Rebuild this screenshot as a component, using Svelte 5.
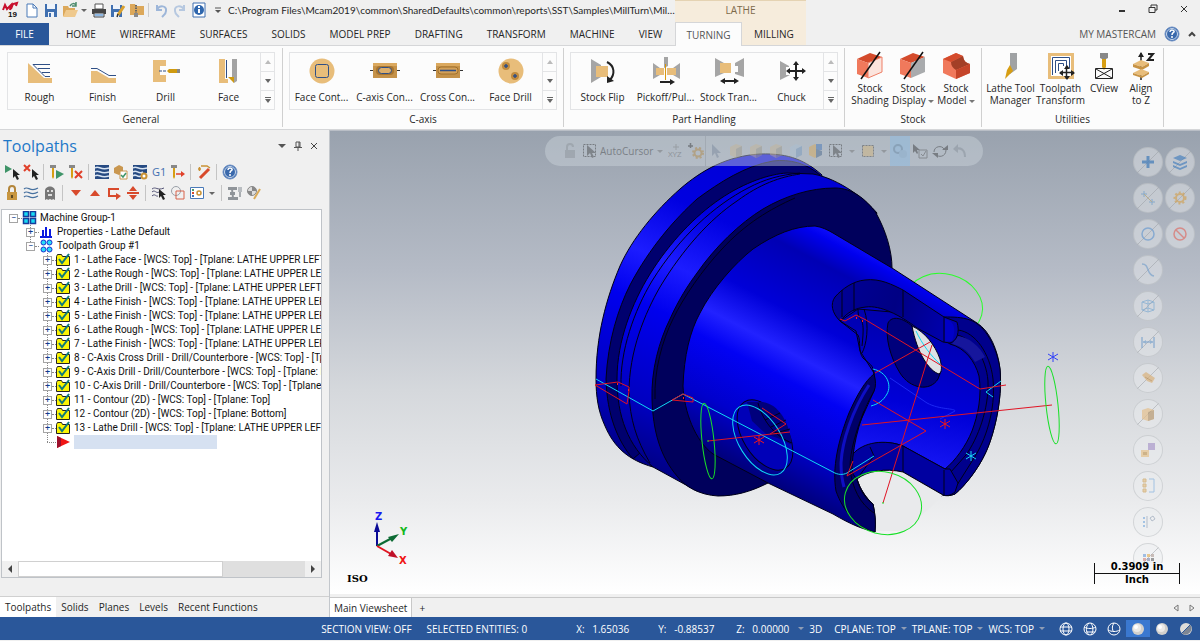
<script>
  const tan = '#e8bd7a';
  const navy = '#2f4f86';

  // inner markup of every icon, keyed by name
  const icons = {
    // quick access, 16 x 16
    logo: '<path d="M1 9l2-5 2 4 4-4-1 5M9 8l2-5 4-1-1 3" fill="none" stroke="#c8102e" stroke-width="2"/><text x="6" y="16" font-size="8" font-weight="bold" font-family="Liberation Sans" fill="#111">19</text>',
    doc: '<path d="M3 2h6l4 4v9H3z" fill="#fff" stroke="#4a7ab8"/><path d="M9 2v4h4" fill="none" stroke="#4a7ab8"/>',
    save: '<path d="M2 2h12v13H2z" fill="#3f6fb0"/><path d="M4 2h8v5H4zM5 10h6v5H5z" fill="#eef3fa"/><path d="M6 11h2v4H6z" fill="#3f6fb0"/>',
    open: '<path d="M1 4h5l1 2h6v8H1z" fill="#dca85a"/><path d="M4 8h12l-3 7H1z" fill="#efc98d"/><path d="M8 4c2-3 4-3 6-1M14 0v4h-4" fill="none" stroke="#4b8a6c" stroke-width="1.5"/>',
    print: '<path d="M4 2h8v5H4z" fill="#fff" stroke="#555"/><path d="M1 7h14v5H1z" fill="#444"/><path d="M3 11h10v4H3z" fill="#dce8f5" stroke="#444"/><path d="M4 13h8" stroke="#3f86d0"/>',
    saveas: '<path d="M1 3h11v12H1z" fill="#3f6fb0"/><path d="M3 3h7v4H3zM4 10h5v5H4z" fill="#eef3fa"/><path d="M14 4l-6 9" stroke="#d9a02e" stroke-width="3"/><path d="M8 12l-1 3" stroke="#333" stroke-width="1.5"/>',
    zip: '<path d="M1 2h5l1 2h8v9H1z" fill="#dca85a"/><path d="M7 3v12" stroke="#666" stroke-width="2" stroke-dasharray="1.500 1"/><path d="M5 11h4v4H5z" fill="#8a8a8a"/>',
    undo: '<path d="M4 3v5h5M4 8c2-5 10-5 9 1 0 3-2 4-4 6" fill="none" stroke="#9db6d9" stroke-width="2"/>',
    redo: '<path d="M12 3v5H7M12 8C10 3 2 3 3 9c0 3 2 4 4 6" fill="none" stroke="#b6c8e0" stroke-width="2"/>',
    info: '<path d="M2 1h12v14H2z" fill="#fff" stroke="#3f6fb0"/><circle cx="8" cy="8" r="5" fill="#2f66ad"/><path d="M8 4v2M8 7v4" stroke="#fff" stroke-width="2"/>',
    more: '<path d="M5 6h6" stroke="#555"/><path d="M5 8h6l-3 3z" fill="#555"/>',

    // ribbon gallery, 32 x 32
    rough: `<path d="M4 8l16 15h8v5H4z" fill="${tan}"/><path d="M9 9.500h17M14 13.500h12M18 17.500h8M9 9.500l12 12h5" fill="none" stroke="${navy}"/>`,
    finish: `<path d="M4 16h6l12 7h7v5H4z" fill="${tan}"/><path d="M4 13.500h6l12 7h7" fill="none" stroke="${navy}"/>`,
    drill: `<path d="M3 5h13v6h-6v9h6v7H3z" fill="${tan}"/><path d="M9 16h8" stroke="${navy}" stroke-dasharray="3 1"/><path d="M19 14h8v4h-8l-2-2z" fill="#cf9a10"/><path d="M27 14h3v4h-3z" fill="#888"/>`,
    face: `<path d="M6 4h6v20h3v4H6z" fill="${tan}"/><path d="M13.500 5v18" stroke="${navy}"/><path d="M19 4h5v22l-3 2-2-3z" fill="#a3a3a3"/><path d="M15 22h6v6z" fill="#cf9a10"/>`,
    facecont: `<circle cx="16" cy="16" r="12.500" fill="${tan}"/><rect x="9.500" y="9.500" width="13" height="13" rx="2" fill="none" stroke="${navy}"/>`,
    caxis: `<path d="M1 15.500h30" stroke="#333"/><path d="M4 8h24v15H4z" fill="#c59249"/><path d="M4 8h24v3H4z" fill="#dba95f"/><rect x="7" y="11" width="18" height="9" rx="4" fill="#a8752f"/><rect x="9.500" y="12.500" width="13" height="6" rx="3" fill="#dcae6b" stroke="${navy}"/>`,
    cross: `<path d="M1 15.500h30" stroke="#333"/><path d="M4 8h24v15H4z" fill="#c59249"/><path d="M4 8h24v3H4z" fill="#dba95f"/><rect x="6" y="12" width="20" height="7" rx="3" fill="#d3a058" stroke="#a0702c"/><path d="M8 15.500h16" stroke="${navy}" stroke-width="1.500"/>`,
    facedrill: `<circle cx="16" cy="16" r="12.500" fill="${tan}"/><circle cx="11" cy="11" r="4" fill="#c08a3d"/><circle cx="20" cy="21" r="4" fill="#c08a3d"/><path d="M11 9v4M9 11h4M20 19v4M18 21h4" stroke="${navy}" stroke-width="1.500"/>`,
    flip: `<path d="M4 4l10 6v12L4 28z" fill="#a5a5a5"/><path d="M9 11h12v11H9z" fill="${tan}"/><path d="M20 7c8 4 8 12 3 18" fill="none" stroke="#222" stroke-width="2"/><path d="M20 21v7l7-2z" fill="#222"/>`,
    pickoff: `<path d="M3 8l7 5v7l-7 4zM30 8l-7 5v7l7 4zM14 2h4v9l-4 2z" fill="#a5a5a5"/><path d="M6 13h8v7H6zM17 13h9v7h-9z" fill="${tan}"/><path d="M15.500 9v16" stroke="#d9980f"/><path d="M10 27h13" stroke="#222" stroke-width="2"/><path d="M20 24l5 3-5 3z" fill="#222"/>`,
    transfer: `<path d="M2 3l9 5v10l-9 4zM31 3l-9 5v3h3v6h-3v2l9 3z" fill="#a5a5a5"/><path d="M7 8h11v10H7z" fill="${tan}"/><path d="M10 26h13" stroke="#222" stroke-width="2"/><path d="M12 23l-5 3 5 3zM21 23l5 3-5 3z" fill="#222"/>`,
    chuck: '<path d="M4 6l9 5v1h-3v8h4l-10 5z" fill="#a5a5a5"/><path d="M20 8v16M13 16h15" stroke="#222" stroke-width="2"/><path d="M17 10l3-4 3 4zM17 22l3 4 3-4zM14 13l-4 3 4 3zM26 13l4 3-4 3z" fill="#222"/>',

    // large ribbon buttons, 32 x 32
    shading: '<path d="M3 9l13-6 12 4-14 6z" fill="#d44b2c"/><path d="M3 9l11 4v15L3 24z" fill="#f0795c"/><path d="M14 13l14-6v15l-14 6z" fill="#fbe4dd" stroke="#ee7f66"/><path d="M7 29L26 2" stroke="#111" stroke-width="1.500"/>',
    display: '<path d="M3 9l13-6 12 4-14 6z" fill="#d44b2c"/><path d="M3 9l11 4v15L3 24z" fill="#f0795c"/><path d="M14 13l14-6v15l-14 6z" fill="#a9abad"/><path d="M7 29L26 2" stroke="#111" stroke-width="1.500"/>',
    model: '<path d="M3 9l13-6 7 3c1 6 4 7 7 8v9l-14 6-13-6z" fill="#f0795c"/><path d="M3 9l13-6 7 3-12 6z" fill="#d44b2c"/><path d="M11 12l12-6c1 6 4 7 7 8l-14 6c-3-2-5-4-5-8z" fill="#a33f27"/><path d="M16 20l14-6v9l-14 6z" fill="#c5452a"/>',
    lathetool: '<path d="M15 3h7v16l-7 5z" fill="#a0a2a4"/><path d="M15 15l3 6-8 8 2-9z" fill="#d79e13"/>',
    transform: `<path d="M3 3h26v26H3z" fill="${tan}"/><path d="M6 6h20v20H6z" fill="#fff"/><path d="M7.500 25V7.500h17V18M10.500 23V10.500h11V16M13.500 21v-7.500h5V16" fill="none" stroke="${navy}"/><path d="M21.500 16v13M15 22.500h14" stroke="#222" stroke-width="1.500"/><path d="M19 19l3-4 3 4zM19 26l3 4 3-4zM18 20l-4 3 4 3zM26 20l4 3-4 3z" fill="#222"/>`,
    cview: '<path d="M12 3h8v5l-2 1h-4l-2-1z" fill="#888"/><path d="M14 9h4v8l-2 3-2-3z" fill="#d79e13"/><path d="M7.500 18.500h17v10h-17zM8 19l16 9M24 19l-16 9" fill="none" stroke="#222"/>',
    align: '<path d="M16 3v27" stroke="#222" stroke-width="1.500"/><path d="M13 7l3-5 3 5z" fill="#222"/><path d="M8 14l8-4 8 3-7 4z" fill="#e8bd7a"/><path d="M8 14l9 3v3l-9-3zM17 17l7-4v3l-7 4z" fill="#c79344"/><path d="M8 23l8-4 8 3-7 4z" fill="#e8bd7a"/><path d="M8 23l9 3v2l-9-3zM17 26l7-4v2l-7 4z" fill="#c79344"/><path d="M23 4h5l-5 6h6" fill="none" stroke="#222" stroke-width="2"/>',

    // toolpath manager, 16 x 16
    selall: '<path d="M1 1l7 4-7 4z" fill="#3f9468"/><path d="M9 5v9l2-2 2 4 2-1-2-4h3z" fill="#222"/>',
    selnone: '<path d="M1 1l6 6M7 1L1 7" stroke="#e0402a" stroke-width="2"/><path d="M9 5v9l2-2 2 4 2-1-2-4h3z" fill="#222"/>',
    regen: '<path d="M1 1h6v3H1z" fill="#888"/><path d="M3 4h2v9l-1 2-1-2z" fill="#d79e13"/><path d="M7 6l8 4-8 5z" fill="#3f9468"/>',
    regenx: '<path d="M1 1h6v3H1z" fill="#888"/><path d="M3 4h2v9l-1 2-1-2z" fill="#d79e13"/><path d="M7 7l7 7M14 7l-7 7" stroke="#e0402a" stroke-width="2"/>',
    waves: '<path d="M1 1h14v14H1z" fill="#264a82"/><path d="M1 4c4-3 5 3 14 0M1 8c4-3 5 3 14 0M1 12c4-3 5 3 14 0" fill="none" stroke="#d8e4f2" stroke-width="1.500"/>',
    verify: '<path d="M1 4l5-3 4 2v5l-4 3-5-2z" fill="#c99750"/><path d="M7 7h7v8H7z" fill="#fff" stroke="#c99750"/><path d="M8 11l2 2 3-4" fill="none" stroke="#3f9468" stroke-width="1.500"/>',
    simul: '<path d="M1 1h14v8H9v6H1z" fill="#264a82"/><path d="M1 4c4-3 5 3 14 0M1 8c4-3 5 3 10 0M1 12c3-3 4 2 8 0" fill="none" stroke="#d8e4f2" stroke-width="1.500"/><circle cx="12" cy="12" r="2.500" fill="#fff" stroke="#c99235" stroke-width="2"/>',
    g1: '<text x="1" y="12" font-size="11" font-family="Open Sans, sans-serif" fill="#3f6fb0">G1</text>',
    feed: '<path d="M1 1h6v3H1z" fill="#888"/><path d="M3 4h2v9l-1 2-1-2z" fill="#d79e13"/><path d="M6 10h7" stroke="#e0402a" stroke-width="1.500"/><path d="M11 7l4 3-4 3z" fill="#e0402a"/>',
    wand: '<path d="M4 14l9-9" stroke="#d84a2c" stroke-width="3"/><path d="M2 5h3M3.500 3v4M5 2h6l3 2" fill="none" stroke="#c99235" stroke-width="1.500"/>',
    help: '<circle cx="8" cy="8" r="7" fill="#3a69ac" stroke="#6c8fc4"/><circle cx="8" cy="8" r="5.500" fill="none" stroke="#c9d8ec"/><path d="M6 6c0-3 5-2 4 0-1 1-2 1-2 3M8 10v2" fill="none" stroke="#fff" stroke-width="1.500"/>',
    lock: '<path d="M3 7h10v8H3z" fill="#c8963f"/><path d="M5 7V4c0-4 6-4 6 0v3" fill="none" stroke="#b3853a" stroke-width="2"/><path d="M7 10h2v3H7z" fill="#5b4720"/>',
    seas: '<path d="M1 4c4-4 6 4 14-1M1 8c4-4 6 4 14-1M1 12c4-4 6 4 14-1" fill="none" stroke="#47719f" stroke-width="1.200"/>',
    ghost: '<path d="M3 15V6c0-6 10-6 10 0v9l-2-1-1 1-2-1-2 1-1-1z" fill="#777"/><path d="M5 5h2v2H5zM9 5h2v2H9zM6 9h4v2H6z" fill="#ddd"/>',
    down: '<path d="M3 5h10l-5 6z" fill="#d84a2c"/>',
    up: '<path d="M3 11h10L8 5z" fill="#d84a2c"/>',
    loop: '<path d="M13 4H3v7h8" fill="none" stroke="#d84a2c" stroke-width="2"/><path d="M10 8l5 3-5 4z" fill="#d84a2c"/>',
    center: '<path d="M2 8h12" stroke="#d84a2c" stroke-width="2"/><path d="M4 6l4-5 4 5zM4 10l4 5 4-5z" fill="#d84a2c"/>',
    pickpath: '<path d="M1 4c4-3 5 2 12-1M1 7c3-3 4 2 7 0M1 11c3-3 4 1 6 0" fill="none" stroke="#557" /><path d="M8 4v9l2-2 2 4 2-1-2-4h3z" fill="#222"/>',
    shapes: '<circle cx="6" cy="6" r="4.500" fill="none" stroke="#9aa0a8"/><path d="M6 6h8v8H6z" fill="none" stroke="#d8624a"/>',
    opts: '<path d="M1.500 2.500h13v11h-13z" fill="#fff" stroke="#4a7ab8"/><path d="M3 4h2v2H3z" fill="#4a9a6a"/><path d="M3 7h2v2H3z" fill="#d84a2c"/><path d="M3 10h2v2H3z" fill="#3f6fb0"/><circle cx="10" cy="8" r="2" fill="none" stroke="#c99235" stroke-width="1.500"/>',
    mach: '<path d="M1 2h9v3H1zM3 7h5v3H3zM1 12h10v3H1z" fill="#8f9499"/><path d="M11 2h4v5h-4z" fill="#b9bdc1"/><path d="M12 7h2v5h-2z" fill="#a9adb1"/><path d="M5 4l1 9" stroke="#8f9499" stroke-width="2"/>',
    edit: '<circle cx="6" cy="6" r="4.500" fill="#ddd" stroke="#888"/><path d="M6 1.500V6h4.500A4.500 4.500 0 0 0 6 1.500zM6 6v4.500A4.500 4.500 0 0 1 1.500 6z" fill="#888"/><path d="M14 4l-6 10" stroke="#d9aa58" stroke-width="2"/>',
    caret: '<path d="M5 7h6l-3 3z" fill="#666"/>',

    // tree nodes, 16 x 14
    machine: '<path d="M1.500 .500h5v5h-5zM8.500 .500h5v5h-5zM1.500 7.500h5v5h-5zM8.500 7.500h5v5h-5z" fill="#19d9f4" stroke="#173c9c" stroke-width="1.500"/>',
    props: '<path d="M1 12h12M4 5v7M7 2v10M11 4v8" fill="none" stroke="#0b1be0" stroke-width="2"/>',
    group: '<g fill="#27dcf6" stroke="#1b2fd0"><circle cx="4.500" cy="3.500" r="2.500"/><circle cx="10.500" cy="3.500" r="2.500"/><circle cx="4.500" cy="10.500" r="2.500"/><circle cx="10.500" cy="10.500" r="2.500"/></g>',
    folder: '<path d="M.500 3.500l1-2h4l1 2h7v9h-13z" fill="#fbf305" stroke="#222"/><path d="M3 6l3 4 7-9" fill="none" stroke="#0f7a7a" stroke-width="2"/>',
    insert: '<path d="M1 1l13 6-13 6z" fill="#f01414"/><path d="M1 1l4 2v8l-4 2z" fill="#9c0f2c"/>',

    // selection bar, 16 x 16
    padlock: '<path d="M3 7h10v8H3z" fill="#858b92"/><path d="M5 7V4c0-4 6-4 6 0" fill="none" stroke="#858b92" stroke-width="2"/>',
    cursor: '<path d="M1.500 1.500h12v12h-12z" fill="none" stroke="#222" stroke-dasharray="2 1"/><path d="M5 2v11l3-3 2 5 2-1-2-4h4z" fill="#333"/>',
    xyz: '<text x="0" y="14" font-size="8" font-family="Open Sans, sans-serif" fill="#555">XYZ</text><path d="M8 1v6M5 4h6" stroke="#777"/>',
    gear: '<circle cx="10" cy="10" r="3.500" fill="none" stroke="#b07d2b" stroke-width="2"/><path d="M0 3h5M2.500 0v5" stroke="#222" stroke-width="1.500"/><circle cx="10" cy="10" r="5" fill="none" stroke="#b07d2b" stroke-width="2" stroke-dasharray="2 2"/>',
    arrow: '<path d="M4 1v12l3-3 2 5 2-1-2-4h4z" fill="#6f7f95"/>',
    box: '<path d="M2 4l6-3 6 2v9l-6 3-6-3z" fill="#c9b48e"/><path d="M8 6l6-3v9l-6 3z" fill="#98917f"/>',
    bluebox: '<path d="M2 4l6-3 6 2v9l-6 3-6-3z" fill="#a9c0d6"/><path d="M8 6l6-3v9l-6 3z" fill="#6a93bd"/>',
    mixbox: '<path d="M1 4l6-3 3 2v9l-3 3-6-3z" fill="#e0a642"/><path d="M8 1h6v6H8z" fill="#2c66b5"/><path d="M8 6l6 2v4l-6 3z" fill="#31557f"/>',
    area: '<path d="M2.500 2.500h11v11h-11z" fill="#d9b36c" stroke="#333" stroke-dasharray="2 1"/>',
    pair: '<circle cx="6" cy="6" r="4" fill="none" stroke="#6b7f92" stroke-width="2"/><circle cx="11" cy="11" r="4" fill="#93adc3"/>',
    check: '<path d="M1 1v9l2-2 2 3 1-1-1-3h3z" fill="#222"/><path d="M7 7h8v8H7zM9 11l2 2 3-5" fill="none" stroke="#444"/>',
    rotate: '<path d="M2 9c0-6 8-7 10-3M14 7c0 7-8 8-10 4" fill="none" stroke="#222"/><path d="M10 7h6V2zM0 10h6v5z" fill="#222"/>',
    back: '<path d="M3 6c6-2 10 1 10 8" fill="none" stroke="#7c858f" stroke-width="2"/><path d="M6 1v9L1 6z" fill="#7c858f"/>',

    // quick masks, 16 x 16
    plus: '<path d="M8 2v12M2 8h12" stroke="#3f7ab8" stroke-width="3"/>',
    layers: '<path d="M8 1l7 3-7 3-7-3z" fill="#4b82bd"/><path d="M1 7l7 3 7-3v2l-7 3-7-3zM1 11l7 3 7-3v2l-7 3-7-3z" fill="#4b82bd"/>',
    nodes: '<path d="M4 1v6M1 4h6M12 9v6M9 12h6" stroke="#6c9cc8"/><path d="M4 4l8 8" stroke="#b5a06c"/>',
    sun: '<circle cx="8" cy="8" r="4" fill="none" stroke="#d0a35a" stroke-width="2"/><circle cx="8" cy="8" r="5.500" fill="none" stroke="#d0a35a" stroke-width="2" stroke-dasharray="2 2"/>',
    ring: '<circle cx="8" cy="8" r="6" fill="none" stroke="#6c9cd0" stroke-width="1.500"/>',
    ban: '<circle cx="8" cy="8" r="6" fill="none" stroke="#dc7068" stroke-width="1.500"/><path d="M4 4l8 8" stroke="#dc7068" stroke-width="1.500"/>',
    curve: '<path d="M2 2c8 0 4 11 12 12" fill="none" stroke="#7ba3cc" stroke-width="1.500"/>',
    cage: '<path d="M2 4l6-2 6 2v8l-6 2-6-2zM2 4l6 2 6-2M8 2v12M2 12l6-2 6 2" fill="none" stroke="#7fabd2"/>',
    dim: '<path d="M2 3v11M14 3v11M3 8h10" stroke="#7ba3cc" stroke-width="1.500"/><path d="M3 8l3-2v4zM13 8l-3-2v4z" fill="#7ba3cc"/>',
    bar: '<path d="M2 5l4-3 9 6-3 5-5-2z" fill="#d9b27d"/><path d="M5 7l7 4" stroke="#b98d52"/>',
    cubes: '<path d="M2 4l6-2 6 2v9l-6 2-6-2z" fill="#e4c08d"/><path d="M8 6l6-2v9l-6 2z" fill="#b89a70"/>',
    colors: '<path d="M8 1h7v7H8z" fill="#ab9acb"/><path d="M1 8h8v7H1z" fill="#e5c28c"/><path d="M3 10h4v3H3z" fill="#c39e61"/>',
    list: '<path d="M3 1h3v3H3zM3 6h3v3H3zM3 11h3v3H3z" fill="#e5c28c" stroke="#cfa96b"/><path d="M9 1h5v13H9" fill="none" stroke="#86b2e0"/>',
    levels: '<path d="M3 3h2v2H3zM3 7h2v2H3zM3 11h2v2H3z" fill="#86b2e0"/><path d="M7 2v12M10 4l3-2 2 3-3 2z" fill="none" stroke="#9ba9bb"/>',
    palette: '<path d="M3 4h3v3H3z" fill="#7fa8dc"/><path d="M7 4h3v3H7z" fill="#e5b765"/><path d="M11 4h3v3h-3z" fill="#b7a6a0"/><path d="M3 8h3v3H3z" fill="#d7918a"/><path d="M7 8h3v3H7z" fill="#8f97b8"/><path d="M11 8h3v3h-3z" fill="#777"/>',

    // status bar, 16 x 16
    globe: '<g fill="none" stroke="#fff"><circle cx="8" cy="8" r="6"/><ellipse cx="8" cy="8" rx="3" ry="6"/><path d="M2 6h12M2 10h12"/></g>',
    globe2: '<g fill="none" stroke="#fff"><circle cx="8" cy="8" r="6"/><path d="M7 2c-4 4-3 9 0 12M9 2c2 3 3 8 0 12M2 6c4 2 8 2 12 0M4 11h9"/></g>',
    globe3: '<g fill="none" stroke="#fff"><circle cx="8" cy="8" r="6"/><path d="M8 2c-2 3-2 5-1 8M2 9c4 2 8 2 12 0"/></g>',
    ball: '<circle cx="8" cy="8" r="6" fill="#d2d0cc"/><circle cx="7" cy="7" r="4" fill="#eceae7"/><circle cx="6" cy="6" r="2" fill="#fff"/>',
    half: '<circle cx="8" cy="8" r="6" fill="#dedcd8"/><path d="M12.200 3.800a6 6 0 0 1-8.400 8.400z" fill="#7d8694"/><path d="M13 3L3 13" stroke="#2a579a"/>'
  };

  const quick = ['doc', 'save', 'open', 'caret', 'print', 'saveas', 'zip', '|', 'undo', 'redo', 'info', 'more'];
  const tabs = ['HOME', 'WIREFRAME', 'SURFACES', 'SOLIDS', 'MODEL PREP', 'DRAFTING', 'TRANSFORM', 'MACHINE', 'VIEW'];

  const galleries = [
    { name: 'General', items: [['rough', 'Rough'], ['finish', 'Finish'], ['drill', 'Drill'], ['face', 'Face']] },
    { name: 'C-axis', items: [['facecont', 'Face Cont...'], ['caxis', 'C-axis Con...'], ['cross', 'Cross Con...'], ['facedrill', 'Face Drill']] },
    { name: 'Part Handling', items: [['flip', 'Stock Flip'], ['pickoff', 'Pickoff/Pul...'], ['transfer', 'Stock Tran...'], ['chuck', 'Chuck']] }
  ];
  const stock = [
    ['shading', 'Stock', 'Shading', false],
    ['display', 'Stock', 'Display', true],
    ['model', 'Stock', 'Model', true]
  ];
  const utilities = [
    ['lathetool', 'Lathe Tool', 'Manager'],
    ['transform', 'Toolpath', 'Transform'],
    ['cview', 'CView', ''],
    ['align', 'Align', 'to Z']
  ];

  const toolsTop = ['selall', 'selnone', '|', 'regen', 'regenx', '|', 'waves', 'verify', 'simul', 'g1', 'feed', '|', 'wand', '|', 'help'];
  const toolsBottom = ['lock', 'seas', 'ghost', '|', 'down', 'up', 'loop', 'center', '|', 'pickpath', 'shapes', 'opts', 'caret', '|', 'mach', 'edit'];

  const operations = [
    '1 - Lathe Face - [WCS: Top] - [Tplane: LATHE UPPER LEFT',
    '2 - Lathe Rough - [WCS: Top] - [Tplane: LATHE UPPER LEF',
    '3 - Lathe Drill - [WCS: Top] - [Tplane: LATHE UPPER LEFT 3',
    '4 - Lathe Finish - [WCS: Top] - [Tplane: LATHE UPPER LEFT',
    '5 - Lathe Finish - [WCS: Top] - [Tplane: LATHE UPPER LEFT',
    '6 - Lathe Rough - [WCS: Top] - [Tplane: LATHE UPPER LEF',
    '7 - Lathe Finish - [WCS: Top] - [Tplane: LATHE UPPER LEFT',
    '8 - C-Axis Cross Drill - Drill/Counterbore - [WCS: Top] - [Tp',
    '9 - C-Axis Drill - Drill/Counterbore - [WCS: Top] - [Tplane: N',
    '10 - C-Axis Drill - Drill/Counterbore - [WCS: Top] - [Tplane:',
    '11 - Contour (2D) - [WCS: Top] - [Tplane: Top]',
    '12 - Contour (2D) - [WCS: Top] - [Tplane: Bottom]',
    '13 - Lathe Drill - [WCS: Top] - [Tplane: LATHE UPPER LEFT'
  ];

  const selection = ['arrow', 'box', 'box', 'box', 'bluebox', 'mixbox', 'cursor', 'caret', 'area', 'caret', 'pair', 'check', 'rotate', 'back'];
  const masks = [
    ['plus', 'layers'], ['nodes', 'sun'], ['ring', 'ban'], ['curve'], ['cage'], ['dim'],
    ['bar'], ['cubes'], ['colors'], ['list'], ['levels'], ['palette']
  ];
  const plainMasks = ['ban', 'colors', 'list', 'levels'];

  const panels = ['Toolpaths', 'Solids', 'Planes', 'Levels', 'Recent Functions'];
  const shadings = ['globe', 'globe2', 'globe3', 'ball', 'ball', 'half'];
</script>

{#snippet icon(name, size = 16, height = size)}
  <svg class="icon" width={size} {height} viewBox="0 0 {size} {height}" aria-hidden="true">{@html icons[name]}</svg>
{/snippet}

{#snippet star(x, y, color)}
  <path d="M{x} {y - 5}v10M{x - 5} {y - 3}l10 6M{x + 5} {y - 3}l-10 6" stroke={color} />
{/snippet}

{#snippet tools(list)}
  <div class="tools">
    {#each list as name}
      {#if name === '|'}
        <span class="sep"></span>
      {:else}
        <button class:small={name === 'caret'} aria-label={name}>{@render icon(name)}</button>
      {/if}
    {/each}
  </div>
{/snippet}

<div class="app">
  <header>
    <div class="left">
      <div class="titlebar">
        <span class="logo">{@render icon('logo', 18)}</span>
        {#each quick as name}
          {#if name === '|'}
            <span class="sep"></span>
          {:else}
            <button class:small={name === 'caret'} aria-label={name}>{@render icon(name)}</button>
          {/if}
        {/each}
        <span class="path">C:\Program Files\Mcam2019\common\SharedDefaults\common\reports\SST\Samples\MillTurn\Mill...</span>
      </div>
      <nav class="tabs">
        <button class="file">FILE</button>
        {#each tabs as tab}
          <button>{tab}</button>
        {/each}
      </nav>
    </div>
    <div class="context">
      <div class="context-title">LATHE</div>
      <nav class="tabs">
        <button class="active">TURNING</button>
        <button>MILLING</button>
      </nav>
    </div>
    <div class="right">
      <div class="window-buttons">
        <button aria-label="Minimize"><svg width="10" height="10"><path d="M2 7h6" stroke="#333" stroke-width="2" /></svg></button>
        <button aria-label="Restore"><svg width="10" height="10"><path d="M3 3V1h6v5H7M1 3.500h6v5H1z" fill="none" stroke="#333" /></svg></button>
        <button aria-label="Close"><svg width="10" height="10"><path d="M2 2l6 6M8 2L2 8" stroke="#333" /></svg></button>
      </div>
      <div class="account">
        <a href="#account">MY MASTERCAM</a>
        <button aria-label="Help">{@render icon('help')}</button>
        <button aria-label="Collapse"><svg width="8" height="8"><path d="M1 6l3-3 3 3" fill="none" stroke="#444" stroke-width="2" /></svg></button>
      </div>
    </div>
  </header>

  <div class="ribbon">
    {#each galleries as group}
      <section class="group gallery-group">
        <div class="gallery">
          {#each group.items as [name, label]}
            <button class="item">
              {@render icon(name, 32)}
              <span>{label}</span>
            </button>
          {/each}
          <div class="scroll">
            <button aria-label="Up"><svg width="6" height="4"><path d="M0 4h6L3 0z" fill="#bbb" /></svg></button>
            <button aria-label="Down"><svg width="6" height="4"><path d="M0 0h6L3 4z" fill="#666" /></svg></button>
            <button aria-label="More"><svg width="6" height="6"><path d="M0 0h6v1H0zM0 2h6L3 6z" fill="#666" /></svg></button>
          </div>
        </div>
        <h2>{group.name}</h2>
      </section>
    {/each}
    <section class="group stock">
      <div class="large">
        {#each stock as [name, first, second, menu]}
          <button>
            {@render icon(name, 32)}
            <span>{first}</span>
            <span>{second}{#if menu}<i class="arrow"></i>{/if}</span>
          </button>
        {/each}
      </div>
      <h2>Stock</h2>
    </section>
    <section class="group utilities">
      <div class="large">
        {#each utilities as [name, first, second]}
          <button>
            {@render icon(name, 32)}
            <span>{first}</span>
            <span>{second}</span>
          </button>
        {/each}
      </div>
      <h2>Utilities</h2>
    </section>
  </div>

  <main>
    <aside>
      <div class="panel-head">
        <h1>Toolpaths</h1>
        <button aria-label="Menu"><svg width="8" height="8"><path d="M0 2h8L4 6z" fill="#555" /></svg></button>
        <button aria-label="Pin"><svg width="8" height="10"><path d="M2 1h4v5H2zM0 6.500h8M4 7v3M5 1v5" fill="none" stroke="#555" /></svg></button>
        <button aria-label="Close"><svg width="8" height="8"><path d="M1 1l6 6M7 1L1 7" stroke="#444" /></svg></button>
      </div>
      {@render tools(toolsTop)}
      {@render tools(toolsBottom)}
      <div class="tree">
        <ul>
          <li>
            <div class="row"><span class="toggle">−</span><span class="dots"></span>{@render icon('machine', 16, 14)}<span>Machine Group-1</span></div>
            <ul class="nested">
              <li>
                <div class="row"><span class="toggle">+</span><span class="dots"></span>{@render icon('props', 16, 14)}<span>Properties - Lathe Default</span></div>
              </li>
              <li class="last">
                <div class="row"><span class="toggle">−</span><span class="dots"></span>{@render icon('group', 16, 14)}<span>Toolpath Group #1</span></div>
                <ul class="nested">
                  {#each operations as operation}
                    <li>
                      <div class="row"><span class="toggle">+</span><span class="dots"></span>{@render icon('folder', 16, 14)}<span>{operation}</span></div>
                    </li>
                  {/each}
                  <li>
                    <div class="row insert"><span class="dots"></span>{@render icon('insert', 16, 14)}<span class="marker"></span></div>
                  </li>
                </ul>
              </li>
            </ul>
          </li>
        </ul>
        <div class="hscroll">
          <button aria-label="Scroll left"><svg width="6" height="8"><path d="M5 0v8L1 4z" fill="#444" /></svg></button>
          <span class="thumb"></span>
          <span class="track"></span>
          <button aria-label="Scroll right"><svg width="6" height="8"><path d="M1 0v8l4-4z" fill="#444" /></svg></button>
        </div>
      </div>
      <nav class="panel-tabs">
        {#each panels as panel, i}
          <button class:active={i === 0}>{panel}</button>
        {/each}
      </nav>
    </aside>

    <div class="work">
      <div class="viewport">
        <svg class="scene" viewBox="330 130 870 463" preserveAspectRatio="xMidYMid meet" aria-label="Part">
          <defs>
            <linearGradient id="body" gradientUnits="userSpaceOnUse" x1="880" y1="252" x2="760" y2="482">
              <stop offset="0" stop-color="#1212ff" />
              <stop offset=".05" stop-color="#0000ee" />
              <stop offset=".14" stop-color="#0000b4" />
              <stop offset=".36" stop-color="#0000d8" />
              <stop offset=".5" stop-color="#2222ff" />
              <stop offset=".6" stop-color="#0202f4" />
              <stop offset=".8" stop-color="#0000cc" />
              <stop offset="1" stop-color="#000074" />
            </linearGradient>
            <linearGradient id="flange" gradientUnits="userSpaceOnUse" x1="790" y1="150" x2="640" y2="480">
              <stop offset="0" stop-color="#0000d4" />
              <stop offset=".25" stop-color="#0000e0" />
              <stop offset=".42" stop-color="#1c1cff" />
              <stop offset=".55" stop-color="#0000ee" />
              <stop offset=".8" stop-color="#0000c0" />
              <stop offset="1" stop-color="#000074" />
            </linearGradient>
            <linearGradient id="bore" gradientUnits="userSpaceOnUse" x1="930" y1="320" x2="900" y2="460">
              <stop offset="0" stop-color="#0000ac" />
              <stop offset=".6" stop-color="#0000d8" />
              <stop offset="1" stop-color="#1616f4" />
            </linearGradient>
            <linearGradient id="wall" gradientUnits="userSpaceOnUse" x1="835" y1="300" x2="950" y2="330">
              <stop offset="0" stop-color="#000096" />
              <stop offset=".5" stop-color="#000084" />
              <stop offset="1" stop-color="#0000b0" />
            </linearGradient>
          </defs>

          <!-- clearance circle behind the part -->
          <ellipse cx="944" cy="304" rx="39" ry="31" transform="rotate(15 944 304)" fill="none" stroke="#2bff2b" />

          <g stroke="#000018" stroke-linejoin="round">
            <!-- back flange -->
            <path fill="url(#flange)" d="M596 378C596 335 606 298 620 265C632 238 655 210 680 188C702 169 727 155 760 153C790 152 806 160 822 174L780 300L653 466C628 459 614 446 605 425C598 410 596 395 596 378Z" />
            <path fill="#00006e" d="M606 378C608 340 618 308 630 284C650 246 675 218 697 198C720 181 745 165 773 160C790 158 806 162 820 174L700 400L633 458C618 440 607 415 606 378Z" />
            <!-- groove and front flange -->
            <path fill="url(#flange)" d="M617 378C617 340 632 302 650 273C670 241 695 215 720 198C745 181 770 173 787 172L813 173C840 178 866 199 877 212L780 400L697 490L653 466C628 445 617 415 617 378Z" />
            <path fill="none" d="M621 385C620 350 634 310 652 280C680 235 715 204 748 187C765 178 780 174 800 172M629 392C629 350 645 312 660 286C683 248 710 218 737 200C760 183 780 176 800 173M629 392C630 418 636 438 650 462" />
            <path fill="#00005c" d="M652 398C651 370 659 340 670 318C678 300 688 284 697 272C715 246 740 222 763 208C785 195 810 187 835 187C852 187 866 198 876 212C886 230 892 250 892 267L855 330L768 482C750 491 735 495 718 495C700 494 685 486 677 475C660 455 653 430 652 398Z" />
            <path fill="none" d="M655 398C654 370 662 340 673 318C683 297 703 268 722 248C745 223 770 208 795 197" />
            <!-- body -->
            <path fill="url(#body)" d="M683 385C684 355 690 330 700 312C712 288 735 262 753 248C775 233 795 225 815 225C822 226 828 229 833 232L892 267L977 322C990 330 998 350 1000 368C1003 400 993 437 985 453C978 468 965 485 955 493C950 495 946 495 943 494L875 530C866 530 850 523 833 513L768 482L713 453C695 440 684 410 683 385Z" />
          </g>

          <g stroke="#000018" stroke-linejoin="round">
            <!-- front rim and bore -->
            <path fill="#00008c" d="M944 316C953 316 962 316 970 319C985 324 997 346 1000 368C1003 400 993 437 985 453C978 468 965 485 955 493C950 495 946 495 943 494L935 460L950 343Z" />
            <path fill="none" d="M958 329C975 331 990 352 993 378C996 410 985 440 974 457L957 484M957 334C972 337 986 356 988 380C989 408 978 437 966 454L950 472" />
            <path fill="#16169c" stroke="none" d="M958 335C970 337 979 345 985 356L975 361C969 351 962 345 952 343Z" />
            <path fill="url(#bore)" d="M858 308L903 312L950 343C965 347 975 360 979 375C982 395 978 414 972 430C966 445 955 460 945 468L903 445C885 438 865 442 853 453L856 430L874 390V372L860 350L856 330L840 320Z" />
            <!-- upper slot -->
            <path fill="url(#wall)" d="M840 320C832 312 830 303 835 296C842 288 853 280 865 279C880 277 893 284 903 289L944 316L957 321C960 331 957 340 950 342L943 341L917 327C900 314 880 304 866 306C855 307 848 311 840 320Z" />
            <path fill="none" d="M842 289V316M854 282V310M903 289V316M944 316V341M858 308C858 325 866 310 862 345M864 308C870 325 866 345 862 352" />
            <path fill="none" d="M840 320L858 334C861 340 858 351 863 357C868 362 874 364 874 373" />
            <path fill="#0000c8" stroke="none" d="M945 318C955 320 956 329 952 340L945 340Z" />
            <!-- cross hole -->
            <path fill="#00007c" d="M912 325C903 317 892 314 888 322C885 336 890 356 900 372C910 388 930 391 938 378L941 370Z" />
            <path fill="#dfe1e4" d="M912 325C925 331 935 344 940 358C942 366 942 371 939 373C929 370 917 352 912 325Z" />
            <!-- lower slot -->
            <path fill="#0000a0" d="M853 453C863 441 885 438 903 445L945 468H950L958 482L955 491C950 495 946 495 943 494L903 471C885 467 867 470 857 478L850 470Z" />
            <path fill="none" d="M903 445V471M870 446L874 455L857 478M944 469V494" />
          </g>
          <path fill="#e9eaec" d="M857 478C867 470 885 467 903 471L943 494L905 530H875C876 520 875 512 873 503C866 497 860 488 857 478Z" />
          <path d="M943 494L903 471C885 467 867 470 857 478C860 488 866 497 873 503C875 512 876 522 875 531" fill="none" stroke="#000018" />
          <g stroke="#000018">
            <path fill="#000068" d="M874 373C876 380 876 386 874 390C862 410 853 440 852 467C852 472 854 476 857 478C860 488 866 497 873 503C875 512 876 520 875 531C858 528 843 510 836 490C832 467 838 440 849 412C857 394 865 380 874 373Z" />
            <path fill="none" stroke="#0e0ec4" stroke-width="3" d="M869 384C853 408 842 440 841 462C841 472 842 479 844 486" />
            <path fill="none" d="M864 410C856 430 850 450 850 467C852 487 860 503 874 512M857 478C860 490 866 498 873 503" />
          </g>

          <!-- left cross hole -->
          <ellipse cx="765" cy="434" rx="39" ry="22" transform="rotate(58 765 434)" fill="#0000b8" stroke="#000018" />
          <path d="M760 401C778 401 790 422 792 444L780 438L766 433L752 420L747 401Z" fill="#00007c" />
          <path d="M758 402C763 422 778 437 792 442M771 426L786 419M772 433L790 428M765 419L780 412" fill="none" stroke="#000018" />

          <!-- toolpaths -->
          <g fill="none" stroke="#10d8f4">
            <path d="M596 378L653 410L683 393L833 471C838 474 843 474 847 472L874 455" />
            <ellipse cx="760" cy="439" rx="39" ry="21" transform="rotate(58 760 439)" />
            <path d="M873 368C887 371 892 384 887 393C883 400 878 403 871 405M916 330C922 343 931 355 940 363M1001 380L986 391L993 396" />
          </g>
          <path d="M890 377L927 402C940 409 955 407 955 410L940 418" fill="none" stroke="#1c28f4" />
          <g fill="none" stroke="#e01424">
            <path d="M595 384L618 381L629 386V390L627 403ZM672 399L683 393L693 397V401L672 399M708 440L790 431M762 407L786 423L770 433" />
            <path d="M840 318L845 320L856 314L866 319L980 388L1006 384M875 372L930 341M932 344L883 502M862 424L1052 404M873 399L926 430L847 475L853 460" />
          </g>
          <path d="M617 383h1M628 389h1M683 397h1M856 317h1M862 320h1" stroke="#ff2020" stroke-width="2" />
          <g fill="none" stroke="#18e028">
            <ellipse cx="708" cy="440" rx="38" ry="6" transform="rotate(84 708 440)" />
            <ellipse cx="1052" cy="404" rx="39" ry="6" transform="rotate(84 1052 404)" />
            <ellipse cx="883" cy="502" rx="39" ry="31" transform="rotate(15 883 502)" />
            <path d="M707 440h2M882 502h2" />
          </g>
          {@render star(759, 439, '#f01818')}
          {@render star(945, 423, '#f01818')}
          {@render star(971, 455, '#18d8f4')}
          {@render star(1053, 356, '#3040f8')}

          <!-- axes -->
          <path d="M377 545V525" stroke="#0a0a96" stroke-width="2" />
          <path d="M374 531L377 521L380 531Z" fill="#0a0a96" />
          <path d="M377 545L392 537" stroke="#0d6b34" stroke-width="2" />
          <path d="M388 536L399 533L392 541Z" fill="#0d6b34" />
          <path d="M377 545L391 553" stroke="#e01420" stroke-width="2" />
          <path d="M388 555L398 557L392 549Z" fill="#c01028" />
          <g class="axis">
            <text x="375" y="519" fill="#1818f0">Z</text>
            <text x="400" y="534" fill="#12b81c">Y</text>
            <text x="399" y="563" fill="#f01414">X</text>
          </g>
        </svg>
        <span class="view-name">ISO</span>

        <div class="masks">
          {#each masks as row}
            <div class="mask-row">
              {#each row as name}
                <button class:slash={!plainMasks.includes(name)} aria-label={name}>{@render icon(name)}</button>
              {/each}
            </div>
          {/each}
        </div>

        <div class="selection-bar">
          <button aria-label="Lock">{@render icon('padlock')}</button>
          <button aria-label="Cursor">{@render icon('cursor')}</button>
          <span class="auto">AutoCursor</span>
          <button class="small" aria-label="AutoCursor options">{@render icon('caret')}</button>
          <button aria-label="Coordinates">{@render icon('xyz')}</button>
          <button class="divide" aria-label="Settings">{@render icon('gear')}</button>
          {#each selection as name}
            <button class:small={name === 'caret'} class:on={name === 'pair'} aria-label={name}>{@render icon(name)}</button>
          {/each}
        </div>

        <div class="scale">
          <span>0.3909 in</span>
          <span class="rule"></span>
          <span>Inch</span>
        </div>
      </div>
      <div class="sheets">
        <button class="sheet">Main Viewsheet</button>
        <button class="add">+</button>
        <span class="fill"></span>
        <button aria-label="Previous"><svg width="6" height="8"><path d="M5 1v6L1 4z" fill="none" stroke="#777" /></svg></button>
        <button aria-label="Next"><svg width="6" height="8"><path d="M1 1v6l4-3z" fill="none" stroke="#777" /></svg></button>
      </div>
    </div>
  </main>

  <footer>
    <span class="section">SECTION VIEW: OFF</span>
    <span class="selected">SELECTED ENTITIES: 0</span>
    <span class="coord"><b>X:</b>1.65036</span>
    <span class="coord"><b>Y:</b>-0.88537</span>
    <span class="coord"><b>Z:</b>0.00000</span>
    <i class="arrow"></i>
    <button>3D</button>
    <button>CPLANE: TOP</button>
    <i class="arrow"></i>
    <button>TPLANE: TOP</button>
    <i class="arrow"></i>
    <button>WCS: TOP</button>
    <i class="arrow"></i>
    <div class="shadings">
      {#each shadings as name, i}
        <button class:on={i === 3} aria-label="Shading {i + 1}">{@render icon(name)}</button>
      {/each}
    </div>
  </footer>
</div>

<style>
  :global(body) {
    background: #fff;
  }

  .app {
    display: flex;
    flex-direction: column;
    box-sizing: border-box;
    min-height: 100vh;
    padding-bottom: 1px;
    overflow: hidden;
    background: #f0f0f0;
    color: #262626;
    font-family: "Open Sans", "Noto Sans", sans-serif;
    font-size: 10px;
    line-height: 12px;
  }

  button {
    display: flex;
    align-items: center;
    justify-content: center;
    margin: 0;
    padding: 0;
    border: 0;
    background: none;
    color: inherit;
    font: inherit;
    white-space: nowrap;
  }

  .icon {
    display: block;
    flex: none;
  }

  h1,
  h2 {
    margin: 0;
    font-size: 10px;
    font-weight: normal;
  }

  .arrow {
    display: inline-block;
    flex: none;
    margin-left: 2px;
    border: 3px solid transparent;
    border-top-color: #777;
    border-bottom: 0;
    vertical-align: middle;
  }

  /* header */
  header {
    display: flex;
    height: 45px;
    border-bottom: 1px solid #d5d6d8;
  }

  .left {
    display: flex;
    flex-direction: column;
    flex: 0 0 675px;
    min-width: 0;
  }

  .titlebar {
    display: flex;
    align-items: center;
    height: 19px;
    margin-bottom: 4px;
  }

  .titlebar .logo {
    margin: 0 2px;
  }

  .titlebar button {
    width: 19px;
  }

  .titlebar button.small {
    width: 10px;
  }

  .titlebar .sep {
    width: 1px;
    height: 14px;
    margin: 0 2px;
    background: #ccc;
  }

  .path {
    flex: 1;
    min-width: 0;
    margin-left: 1px;
    overflow: hidden;
    font-family: Lato, sans-serif;
    text-overflow: ellipsis;
    white-space: nowrap;
  }

  .tabs {
    display: flex;
    height: 22px;
  }

  .tabs button {
    padding: 0 12px;
  }

  .tabs .file {
    width: 49px;
    margin-right: 5px;
    background: #2a579a;
    color: #fff;
  }

  .context {
    display: flex;
    flex-direction: column;
    flex: 0 0 131px;
    background: #f6ecdc;
  }

  .context-title {
    height: 22px;
    box-sizing: border-box;
    padding-top: 3px;
    border-top: 1px solid #e5d3b3;
    color: #7d6a4a;
    text-align: center;
  }

  .context .tabs {
    height: 23px;
  }

  .context .active {
    width: 67px;
    height: 24px;
    box-sizing: border-box;
    border: 1px solid #d5d6d8;
    border-bottom: 0;
    background: #fcfcfc;
    color: #555;
  }

  .right {
    display: flex;
    flex-direction: column;
    flex: 1;
    align-items: flex-end;
    justify-content: space-between;
  }

  .window-buttons {
    display: flex;
    gap: 21px;
    padding: 4px 11px 0 0;
  }

  .account {
    display: flex;
    align-items: center;
    gap: 8px;
    height: 22px;
    padding-right: 4px;
    color: #555;
  }

  .account a {
    color: inherit;
    text-decoration: none;
  }

  /* ribbon */
  .ribbon {
    display: flex;
    height: 83px;
    border-bottom: 1px solid #d5d6d8;
    background: #fcfcfc;
  }

  .group {
    display: flex;
    flex-direction: column;
    align-items: center;
    justify-content: space-between;
    box-sizing: border-box;
    margin: 2px 0;
    padding: 4px 0 2px;
    border-right: 1px solid #d0d0d0;
  }

  .gallery-group {
    flex: 0 0 281px;
  }

  .gallery-group:first-child {
    flex-basis: 283px;
  }

  .gallery {
    display: flex;
    height: 56px;
    border: 1px solid #e3e4e6;
  }

  .item {
    flex-direction: column;
    width: 63px;
    justify-content: flex-start;
    gap: 4px;
    padding-top: 2px;
  }

  .scroll {
    display: flex;
    flex-direction: column;
    width: 13px;
    border-left: 1px solid #e3e4e6;
  }

  .scroll button {
    flex: 1;
  }

  .scroll button + button {
    border-top: 1px solid #e3e4e6;
  }

  .stock {
    flex: 0 0 137px;
  }

  .utilities {
    flex: 0 0 182px;
  }

  .large {
    display: flex;
    justify-content: center;
    width: 100%;
    margin-top: -2px;
  }

  .large button {
    flex: 0 0 43px;
    flex-direction: column;
    justify-content: flex-start;
  }

  .large button span {
    min-height: 12px;
  }

  .utilities button {
    flex-basis: 37px;
  }

  .utilities button:nth-child(-n + 2) {
    flex-basis: 50px;
  }

  /* toolpath manager */
  main {
    display: flex;
    flex: 1;
    min-height: 0;
  }

  aside {
    display: flex;
    flex: 0 0 329px;
    flex-direction: column;
    min-width: 0;
    border-right: 1px solid #c3c7cc;
  }

  .panel-head {
    display: flex;
    align-items: center;
    gap: 8px;
    height: 31px;
    padding: 0 11px 0 3px;
  }

  .panel-head h1 {
    flex: 1;
    color: #1e78c8;
    font-size: 16px;
    line-height: 20px;
  }

  .tools {
    display: flex;
    align-items: center;
    height: 21px;
    padding-left: 2px;
  }

  .tools button {
    width: 19px;
  }

  .tools button.small {
    width: 12px;
  }

  .tools .sep {
    width: 1px;
    height: 16px;
    margin: 0 3px;
    background: #c4c4c4;
  }

  .tree {
    display: flex;
    flex: 1;
    flex-direction: column;
    justify-content: space-between;
    min-height: 0;
    margin: 6px 7px 18px 1px;
    padding-top: 1px;
    overflow: hidden;
    border: 1px solid #bfc3c8;
    background: #fff;
    color: #111;
    font-family: Roboto, sans-serif;
  }

  .tree ul {
    margin: 0;
    padding: 0 0 0 7px;
    list-style: none;
  }

  .tree ul.nested {
    padding-left: 17px;
  }

  .nested > li {
    background: repeating-linear-gradient(#888 0 1px, transparent 1px 2px) 4px 0 / 1px 100% no-repeat;
  }

  .nested > li.last,
  .nested > li:last-child {
    background-size: 1px 7px;
  }

  .row {
    display: flex;
    align-items: center;
    height: 14px;
    white-space: nowrap;
  }

  .row .icon {
    margin-right: 2px;
  }

  .toggle {
    flex: none;
    box-sizing: border-box;
    width: 9px;
    height: 9px;
    border: 1px solid #a5a5a5;
    background: #fff;
    color: #123a8c;
    font-size: 9px;
    line-height: 7px;
    text-align: center;
  }

  .dots {
    flex: none;
    width: 4px;
    border-top: 1px dotted #888;
  }

  .insert .dots {
    width: 9px;
    margin-left: 4px;
  }

  .marker {
    width: 143px;
    height: 14px;
    background: #d6e1f1;
  }

  .hscroll {
    display: flex;
    height: 16px;
    background: #f0f0f0;
  }

  .hscroll button {
    width: 16px;
  }

  .thumb {
    flex: 205;
    box-sizing: border-box;
    border: 1px solid #d0d0d0;
    background: #fff;
  }

  .track {
    flex: 83;
    background: #dfdfdf;
  }

  .panel-tabs {
    display: flex;
    height: 20px;
    border-top: 1px solid #d0d0d0;
  }

  .panel-tabs button {
    padding: 0 5px;
  }

  .panel-tabs .active {
    background: #fff;
  }

  /* graphics window */
  .work {
    display: flex;
    flex: 1;
    flex-direction: column;
    min-width: 0;
  }

  .viewport {
    position: relative;
    flex: 1;
    min-height: 0;
    border-top: 1px solid #b9bec6;
    background: linear-gradient(#99a2ae, #b5bbc6 30%, #d5d8dc 56%, #eaebed 80%, #fff);
  }

  .scene {
    position: absolute;
    inset: 0;
    width: 100%;
    height: 100%;
  }

  .axis {
    font-family: "DejaVu Sans", sans-serif;
    font-size: 10px;
    font-weight: bold;
  }

  .view-name {
    position: absolute;
    bottom: 9px;
    left: 17px;
    color: #000;
    font-family: "DejaVu Serif", serif;
    font-size: 10px;
    font-weight: bold;
  }

  .selection-bar {
    position: absolute;
    top: 5px;
    left: 215px;
    display: flex;
    align-items: center;
    height: 30px;
    padding: 0 13px 0 15px;
    border-radius: 15px;
    background: rgba(205, 212, 219, .45);
    font-size: 10px;
  }

  .selection-bar button {
    width: 20px;
    height: 30px;
  }

  .selection-bar .icon,
  .selection-bar .auto {
    opacity: .4;
  }

  .selection-bar .auto {
    width: 54px;
  }

  .selection-bar button.small {
    width: 12px;
  }

  .selection-bar .divide {
    border-right: 1px solid #a2aab3;
  }

  .selection-bar .on {
    background: rgba(140, 185, 225, .5);
  }

  .masks {
    position: absolute;
    top: 16px;
    right: 5px;
    display: flex;
    flex-direction: column;
    gap: 6px;
    height: 416px;
    overflow: hidden;
  }

  .mask-row {
    display: flex;
    gap: 2px;
  }

  .masks button {
    box-sizing: border-box;
    width: 30px;
    height: 30px;
    border: 1px solid rgba(160, 165, 170, .35);
    border-radius: 50%;
    background: rgba(235, 237, 240, .45);
  }

  .masks .slash {
    background: linear-gradient(135deg, transparent 49%, rgba(150, 155, 160, .5) 49% 51%, transparent 51%), rgba(235, 237, 240, .45);
  }

  .masks .icon {
    opacity: .7;
  }

  .scale {
    position: absolute;
    right: 20px;
    bottom: 8px;
    display: flex;
    flex-direction: column;
    align-items: center;
    width: 86px;
    color: #000;
    font-family: "DejaVu Sans", sans-serif;
    font-size: 10px;
    font-weight: bold;
  }

  .rule {
    width: 100%;
    height: 1px;
    background: #111;
  }

  .scale::before,
  .scale::after {
    position: absolute;
    top: 2px;
    bottom: 2px;
    left: 0;
    width: 1px;
    background: #111;
    content: "";
  }

  .scale::after {
    right: 0;
    left: auto;
  }

  .sheets {
    display: flex;
    height: 19px;
    margin-top: 3px;
    border-top: 1px solid #c8c8c8;
  }

  .sheet {
    padding: 0 4px;
    border-right: 1px solid #c8c8c8;
    background: #fff;
  }

  .sheets .add {
    width: 20px;
  }

  .fill {
    flex: 1;
  }

  .sheets button:nth-last-child(-n + 2) {
    width: 16px;
  }

  /* status bar */
  footer {
    display: flex;
    align-items: center;
    justify-content: flex-end;
    height: 23px;
    background: #2a579a;
    color: #fff;
    white-space: nowrap;
  }

  footer .selected {
    margin: 0 49px 0 15px;
  }

  .coord {
    margin-right: 29px;
  }

  .coord:nth-of-type(4) {
    margin-right: 22px;
  }

  .coord:nth-of-type(5) {
    margin-right: 4px;
  }

  .coord b {
    display: inline-block;
    width: 16px;
    font-weight: normal;
  }

  footer .arrow {
    margin: 0 5px;
    border-top-color: #8f9db5;
  }

  footer button + button {
    margin-left: 12px;
  }

  .shadings {
    display: flex;
    margin-left: 4px;
    padding-right: 2px;
  }

  .shadings button {
    width: 24px;
    height: 17px;
    margin: 0;
  }

  .shadings .on {
    background: #3a78d0;
  }
</style>
